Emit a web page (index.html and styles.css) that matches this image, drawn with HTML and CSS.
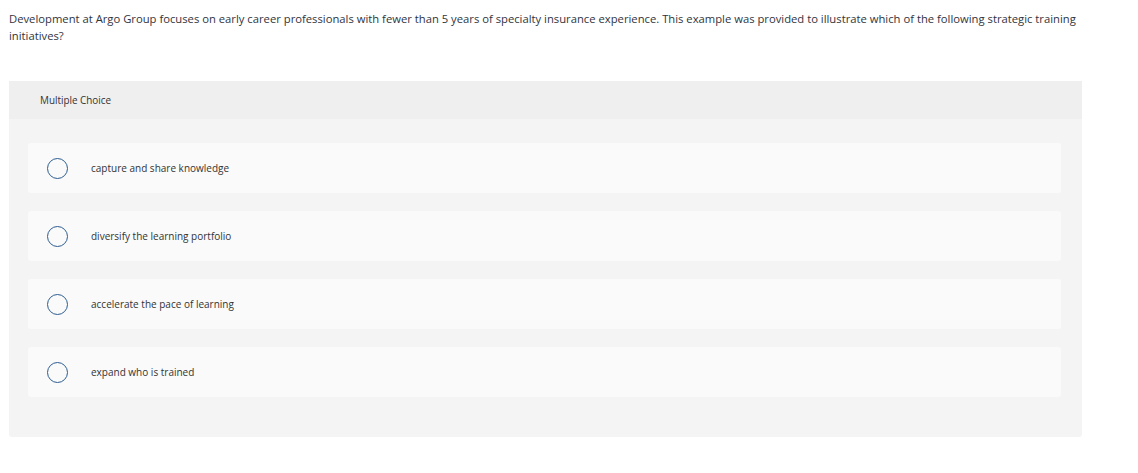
FILE: index.html
```html
<!DOCTYPE html>
<html>
<head>
<meta charset="utf-8">
<link rel="stylesheet" href="styles.css">
</head>
<body>
<div class="page">
  <p class="question">Development at Argo Group focuses on early career professionals with fewer than 5 years of specialty insurance experience. This example was provided to illustrate which of the following strategic training initiatives?</p>
  <div class="panel">
    <div class="panel-header">Multiple Choice</div>
    <div class="panel-body">
      <div class="option"><span class="radio"></span><span class="label">capture and share knowledge</span></div>
      <div class="option"><span class="radio"></span><span class="label">diversify the learning portfolio</span></div>
      <div class="option"><span class="radio"></span><span class="label">accelerate the pace of learning</span></div>
      <div class="option"><span class="radio"></span><span class="label">expand who is trained</span></div>
    </div>
  </div>
</div>
</body>
</html>
```
FILE: styles.css
```css
html, body {
  margin: 0;
  padding: 0;
  background: #ffffff;
}
.page {
  padding: 10px 9px 0 9px;
  width: 1073px;
  font-family: "Open Sans", Lato, sans-serif;
  color: #333333;
}
.question {
  margin: 0;
  font-size: 11.25px;
  line-height: 17px;
  color: #2f3440;
}
.panel {
  margin-top: 37px;
  width: 1073px;
  background: #f4f4f4;
  border-radius: 0 0 3px 3px;
}
.panel-header {
  height: 38px;
  box-sizing: border-box;
  padding-left: 31px;
  display: flex;
  align-items: center;
  background: #efefef;
  font-size: 9.9px;
  color: #333333;
}
.panel-body {
  padding: 24px 21px 40px 19px;
  display: flex;
  flex-direction: column;
  gap: 18px;
}
.option {
  height: 50px;
  background: #fafafa;
  border-radius: 3px;
  display: flex;
  align-items: center;
  padding-left: 19px;
}
.radio {
  width: 19px;
  height: 19px;
  border: 1.5px solid #2c5d8f;
  border-radius: 50%;
  flex: none;
}
.label {
  margin-left: 23px;
  font-size: 10px;
  color: #333333;
}
```
